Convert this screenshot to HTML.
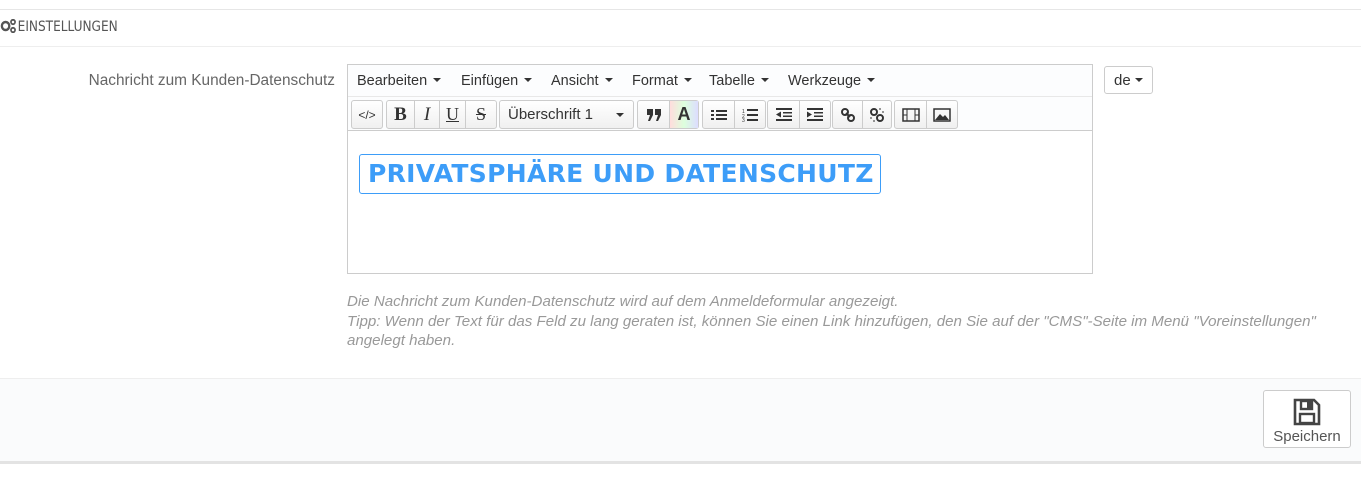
<!DOCTYPE html><html><head><meta charset="utf-8"><style>
*{box-sizing:border-box;margin:0;padding:0}
body{width:1361px;height:477px;background:#fff;font-family:"Liberation Sans",sans-serif;position:relative;overflow:hidden;color:#555}
.a{position:absolute}
.tb{position:absolute;top:100px;height:29px;border:1px solid #ccc;border-radius:3px;background:linear-gradient(#fff,#f0f0f0);display:flex}
.tb span{display:flex;align-items:center;justify-content:center;border-right:1px solid #ccc;height:100%;font-size:15px;color:#333}
.tb span:last-child{border-right:none}
.m{font-size:14.5px;color:#333;position:absolute;top:73px}
.m:after{content:"";display:inline-block;margin-left:6px;border-left:4px solid transparent;border-right:4px solid transparent;border-top:4px solid #333;vertical-align:3px}
</style></head><body>
<div class="a" style="left:0;top:9px;width:1361px;height:1px;background:#e6e6e6"></div>
<div class="a" style="left:0;top:46px;width:1361px;height:1px;background:#eee"></div>
<div class="a" style="left:0;top:19px;font-size:14.5px;color:#555;font-family:'DejaVu Sans Condensed','Liberation Sans Narrow',sans-serif;transform:scaleX(0.93);transform-origin:0 0;white-space:nowrap">
<svg width="19" height="14" viewBox="0 0 19 14" style="vertical-align:-2px"><circle cx="6" cy="7" r="4" fill="none" stroke="#555" stroke-width="2.5"/><circle cx="14" cy="3" r="2.2" fill="none" stroke="#555" stroke-width="1.8"/><circle cx="14" cy="11" r="2.2" fill="none" stroke="#555" stroke-width="1.8"/></svg>EINSTELLUNGEN</div>
<div class="a" style="left:0;width:335px;text-align:right;top:72px;font-size:15.4px;color:#666">Nachricht zum Kunden-Datenschutz</div>
<div class="a" style="left:347px;top:64px;width:746px;height:210px;border:1px solid #ccc;background:#fff"></div>
<div class="a" style="left:348px;top:65px;width:744px;height:32px;background:#fcfdfe;border-bottom:1px solid #e8e8e8"></div>
<div class="a" style="left:348px;top:97px;width:744px;height:34px;background:#fcfdfe;border-bottom:1px solid #ccc"></div>
<span class="m" style="left:357px">Bearbeiten</span><span class="m" style="left:461px">Einfügen</span><span class="m" style="left:551px">Ansicht</span><span class="m" style="left:632px">Format</span><span class="m" style="left:709px">Tabelle</span><span class="m" style="left:788px">Werkzeuge</span>
<div class="tb" style="left:351px;width:32px"><span style="width:30px;font-size:12px">&lt;/&gt;</span></div>
<div class="tb" style="left:386px;width:111px"><span style="width:28px;font-weight:bold;font-family:'Liberation Serif',serif;font-size:19px">B</span><span style="width:25px;font-style:italic;font-family:'Liberation Serif',serif;font-size:19px">I</span><span style="width:26px;text-decoration:underline;font-family:'Liberation Serif',serif;font-size:18px">U</span><span style="width:30px;text-decoration:line-through;font-family:'Liberation Serif',serif;font-size:18px">S</span></div>
<div class="tb" style="left:499px;width:135px"><span style="width:133px;justify-content:space-between;padding:0 9px 0 8px;font-size:15px">Überschrift 1<i style="border-left:4px solid transparent;border-right:4px solid transparent;border-top:4px solid #333"></i></span></div>
<div class="tb" style="left:637px;width:62px"><span style="width:32px"><svg width="14" height="12"><path d="M0 0h6v6l-3 6H1l2-6H0zM8 0h6v6l-3 6H9l2-6H8z" fill="#333"/></svg></span><span style="width:28px;font-weight:bold;font-size:18px;background:linear-gradient(90deg,#fdd,#dfd,#ddf)">A</span></div>
<div class="tb" style="left:702px;width:64px"><span style="width:32px"><svg width="16" height="12"><path d="M0 1h3v2H0zM0 5h3v2H0zM0 9h3v2H0zM5 1h11v2H5zM5 5h11v2H5zM5 9h11v2H5z" fill="#333"/></svg></span><span style="width:30px"><svg width="16" height="14"><path d="M5 1h11v2H5zM5 6h11v2H5zM5 11h11v2H5z" fill="#333"/><text x="0" y="5" font-size="5" fill="#333">1</text><text x="0" y="10" font-size="5" fill="#333">2</text><text x="0" y="14" font-size="5" fill="#333">3</text></svg></span></div>
<div class="tb" style="left:767px;width:64px"><span style="width:32px"><svg width="16" height="13"><path d="M0 0h16v2H0zM7 4h9v1.5H7zM7 7.5h9v1.5H7zM0 11h16v2H0zM5 3.5v6L0 6.5z" fill="#333"/></svg></span><span style="width:30px"><svg width="16" height="13"><path d="M0 0h16v2H0zM7 4h9v1.5H7zM7 7.5h9v1.5H7zM0 11h16v2H0zM0 3.5v6L5 6.5z" fill="#333"/></svg></span></div>
<div class="tb" style="left:832px;width:60px"><span style="width:30px"><svg width="14" height="14"><circle cx="4" cy="4" r="3" fill="none" stroke="#333" stroke-width="2"/><circle cx="10" cy="10" r="3" fill="none" stroke="#333" stroke-width="2"/><path d="M5 5l4 4" stroke="#333" stroke-width="2"/></svg></span><span style="width:28px"><svg width="16" height="16"><circle cx="5" cy="5" r="3" fill="none" stroke="#333" stroke-width="2"/><circle cx="11" cy="11" r="3" fill="none" stroke="#333" stroke-width="2"/><path d="M11 1v2M15 5h-2M1 11h2M5 15v-2" stroke="#333"/></svg></span></div>
<div class="tb" style="left:894px;width:64px"><span style="width:32px"><svg width="18" height="14"><rect x="1" y="1" width="16" height="12" fill="none" stroke="#333" stroke-width="1.5"/><path d="M5 1v12M13 1v12M1 7h4M13 7h4" stroke="#333"/></svg></span><span style="width:30px"><svg width="18" height="14"><rect x="1" y="1" width="16" height="12" fill="none" stroke="#333" stroke-width="1.5"/><path d="M2 12l5-6 3 3 2-2 4 5z" fill="#333"/></svg></span></div>
<div class="a" style="left:359px;top:154px;width:522px;height:40px;border:1px solid #3d9df8;border-radius:3px"></div>
<div class="a" style="left:368px;top:159px;font-family:'DejaVu Sans',sans-serif;font-weight:bold;font-size:25px;color:#3d9df8;white-space:nowrap;letter-spacing:0.3px">PRIVATSPHÄRE UND DATENSCHUTZ</div>
<div class="a" style="left:1104px;top:66px;width:49px;height:28px;border:1px solid #ccc;border-radius:3px;font-size:15px;color:#333;padding:5px 0 0 9px;background:#fff">de <i style="display:inline-block;border-left:4px solid transparent;border-right:4px solid transparent;border-top:4px solid #333;vertical-align:3px"></i></div>
<div class="a" style="left:347px;top:292px;font-size:15.1px;font-style:italic;color:#999;line-height:19.5px;white-space:nowrap">Die Nachricht zum Kunden-Datenschutz wird auf dem Anmeldeformular angezeigt.<br>Tipp: Wenn der Text für das Feld zu lang geraten ist, können Sie einen Link hinzufügen, den Sie auf der "CMS"-Seite im Menü "Voreinstellungen"<br>angelegt haben.</div>
<div class="a" style="left:0;top:378px;width:1361px;height:86px;background:#fafbfc;border-top:1px solid #eee;border-bottom:3px solid #e3e3e3"></div>
<div class="a" style="left:1263px;top:390px;width:88px;height:58px;border:1px solid #ccc;border-radius:3px;background:#fff;text-align:center;font-size:15px;color:#555">
<svg width="30" height="30" viewBox="0 0 30 30" style="margin-top:6px"><path d="M3 3h19l5 5v19H3z" fill="none" stroke="#444" stroke-width="2.6"/><rect x="9" y="4" width="11" height="8" fill="none" stroke="#444" stroke-width="2.4"/><rect x="15" y="5" width="4" height="6" fill="#444"/><rect x="8" y="17" width="14" height="9" fill="none" stroke="#444" stroke-width="2.4"/></svg><div style="margin-top:-3px">Speichern</div></div>
</body></html>
